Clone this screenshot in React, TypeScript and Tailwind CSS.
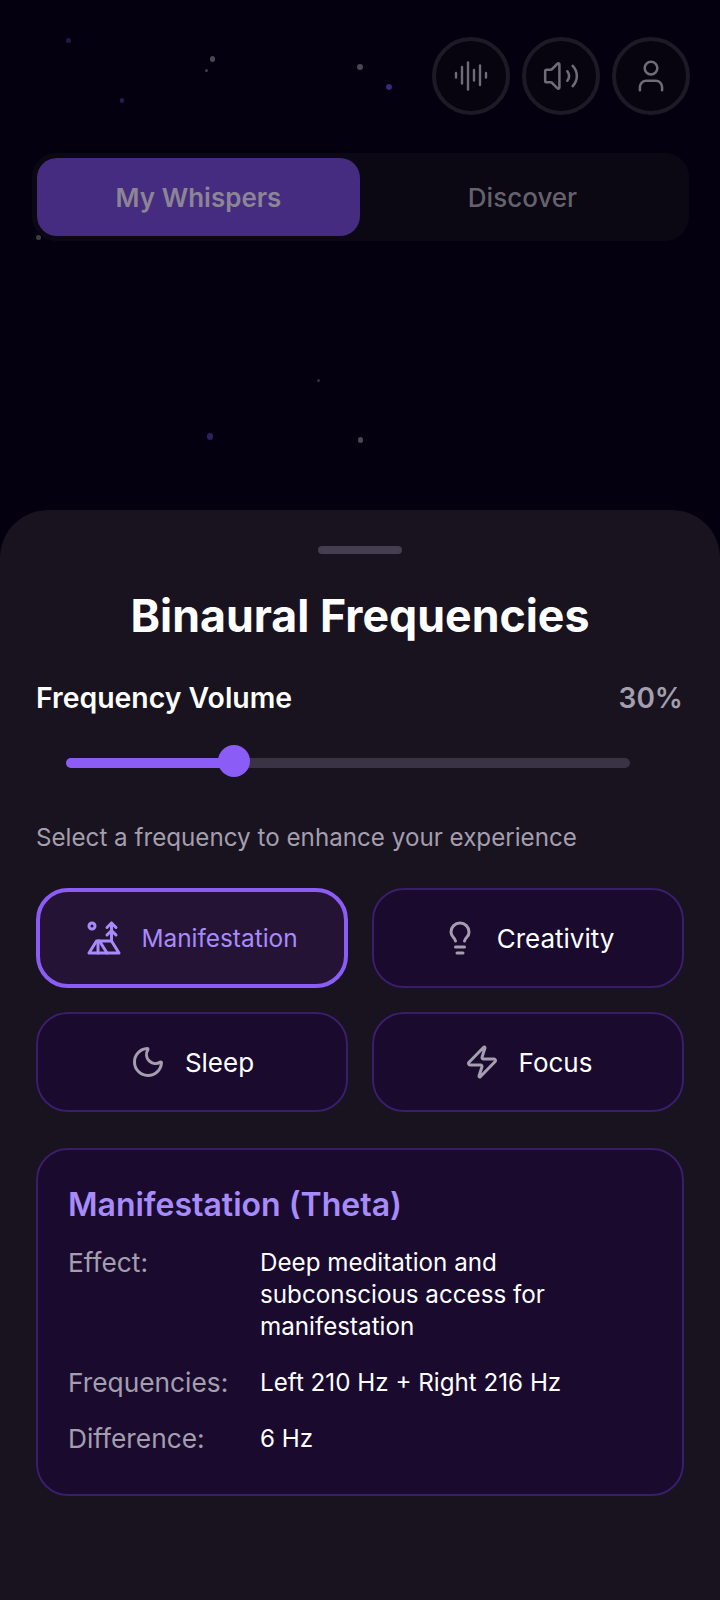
import { AudioLines, Lightbulb, Moon, TentTree, User, Volume2, Zap } from 'lucide-react'

const stars = [
  { className: 'left-[66px] top-[38px] h-[5px] w-[5px] bg-[#1f1a4a]' },
  { className: 'left-[210px] top-[56px] h-[6px] w-[5px] bg-[#4a4750]' },
  { className: 'left-[205px] top-[69px] h-[3px] w-[3px] bg-[#3e3b45]' },
  { className: 'left-[357px] top-[64px] h-[6px] w-[6px] bg-[#4a4750]' },
  { className: 'left-[386px] top-[84px] h-[6px] w-[6px] bg-[#332a7a]' },
  { className: 'left-[120px] top-[98px] h-[5px] w-[4px] bg-[#231d52]' },
  { className: 'left-[36px] top-[235px] h-[5px] w-[5px] bg-[#3f3d44]' },
  { className: 'left-[317px] top-[379px] h-[3px] w-[3px] bg-[#35323b]' },
  { className: 'left-[207px] top-[433px] h-[7px] w-[6px] bg-[#2c2160]' },
  { className: 'left-[358px] top-[437px] h-[6px] w-[5px] bg-[#4a4750]' },
]

const headerButtons = [
  { icon: AudioLines, size: 36 },
  { icon: Volume2, size: 38 },
  { icon: User, size: 38 },
]

const frequencies = [
  { icon: TentTree, label: 'Manifestation', active: true },
  { icon: Lightbulb, label: 'Creativity', active: false },
  { icon: Moon, label: 'Sleep', active: false },
  { icon: Zap, label: 'Focus', active: false },
]

const details = [
  { label: 'Effect:', value: 'Deep meditation and subconscious access for manifestation', className: 'mt-[22px]' },
  { label: 'Frequencies:', value: 'Left 210 Hz + Right 216 Hz', className: 'mt-[24px]' },
  { label: 'Difference:', value: '6 Hz', className: 'mt-[24px]' },
]

export default function App() {
  return (
    <div className="relative flex min-h-[1600px] flex-col overflow-hidden bg-[#05000f] font-['Inter',sans-serif]">
      {/* Stars */}
      {stars.map((star) => (
        <span key={star.className} className={`absolute rounded-full ${star.className}`} />
      ))}

      {/* Header */}
      <header className="relative flex justify-end gap-[12px] pr-[30px] pt-[37px]">
        {headerButtons.map(({ icon: Icon, size }, i) => (
          <button
            key={i}
            className="flex h-[78px] w-[78px] items-center justify-center rounded-full border-4 border-[#1d1a25] bg-[#07030f] text-[#6f6c76]"
          >
            <Icon size={size} strokeWidth={1.6} />
          </button>
        ))}
      </header>

      {/* Tabs */}
      <div className="relative ml-[32px] mr-[31px] mt-[38px] flex h-[88px] rounded-[24px] bg-[#0b0713] pb-[5px] pl-[5px] pr-[4px] pt-[5px]">
        <div className="flex w-[323px] items-center justify-center rounded-[20px] bg-[#462c80] text-[26px] font-semibold text-[#8b8594]">
          My Whispers
        </div>
        <div className="flex flex-1 items-center justify-center text-[26px] font-medium text-[#65626d]">Discover</div>
      </div>

      {/* Sheet */}
      <section className="relative mt-[269px] flex flex-1 flex-col rounded-t-[48px] bg-[#18131f] px-[36px]">
        <div className="mx-auto mt-[36px] h-[8px] w-[84px] rounded-full bg-[#443e50]" />
        <h2 className="mt-[34px] text-center text-[44.7px] font-bold leading-[56px] text-white">Binaural Frequencies</h2>

        <div className="mt-[36px] flex items-center justify-between pr-[1px]">
          <span className="text-[28.4px] font-semibold leading-[36px] text-white">Frequency Volume</span>
          <span className="text-[28px] font-semibold leading-[36px] text-[#a49eae]">30%</span>
        </div>

        {/* Slider */}
        <div className="relative ml-[30px] mt-[42px] h-[10px] w-[564px] rounded-full bg-[#3a3344]">
          <div className="h-full w-[168px] rounded-full bg-[#8b5cf6]" />
          <div className="absolute left-[152px] top-[-13px] h-[32px] w-[32px] rounded-full bg-[#8b5cf6]" />
        </div>

        <p className="mt-[54px] text-[24.2px] leading-[32px] text-[#a49eae]">Select a frequency to enhance your experience</p>

        {/* Frequency options */}
        <div className="mt-[34px] grid grid-cols-2 gap-x-[24px] gap-y-[24px]">
          {frequencies.map(({ icon: Icon, label, active }) => (
            <button
              key={label}
              className={
                active
                  ? 'flex h-[100px] items-center justify-center gap-[19px] rounded-[32px] border-[4px] border-[#8b5cf6] bg-[#251335] text-[24.4px] text-[#a78bfa]'
                  : 'flex h-[100px] items-center justify-center gap-[19px] rounded-[32px] border-2 border-[#3a1d6b] bg-[#1a0b2e] text-[26px] text-white'
              }
            >
              <Icon size={36} strokeWidth={2} className={active ? 'text-[#a78bfa]' : 'text-[#a49eae]'} />
              {label}
            </button>
          ))}
        </div>

        {/* Details */}
        <div className="mt-[36px] rounded-[32px] border-2 border-[#3a1d6b] bg-[#1a0b2e] px-[30px] pb-[39px] pt-[35px]">
          <h3 className="text-[32px] font-semibold leading-[40px] text-[#a78bfa]">Manifestation (Theta)</h3>
          {details.map((row) => (
            <div key={row.label} className={`flex leading-[32px] ${row.className}`}>
              <span className="w-[192px] shrink-0 text-[26.3px] text-[#a49eae]">{row.label}</span>
              <span className="w-[320px] text-[24.2px] text-white">{row.value}</span>
            </div>
          ))}
        </div>
      </section>
    </div>
  )
}
